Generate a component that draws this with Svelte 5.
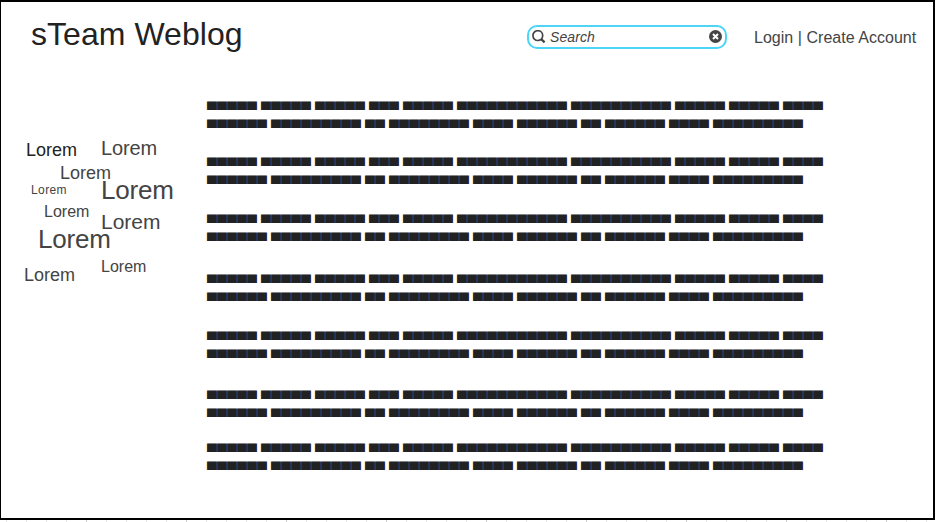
<script>
  const tags = [
    { x: 26, base: 156, size: 18, dark: true },
    { x: 101, base: 155, size: 20, spacing: -0.15 },
    { x: 60, base: 179, size: 18 },
    { x: 31, base: 194, size: 12, spacing: 0.4 },
    { x: 101, base: 199, size: 26, spacing: -0.2 },
    { x: 44, base: 218, size: 16 },
    { x: 101, base: 230, size: 21 },
    { x: 38, base: 248, size: 26, spacing: -0.2 },
    { x: 101, base: 273, size: 16 },
    { x: 24, base: 281, size: 18 }
  ];
  // Word lengths of the two placeholder lines
  const lines = [
    [5, 5, 5, 3, 5, 11, 10, 5, 5, 4],
    [6, 9, 2, 8, 4, 6, 2, 6, 4, 9]
  ].map((l) => l.map((n) => '▄'.repeat(n)).join(' '));
  // Space after each post
  const gaps = [20, 21, 24, 21, 23, 17, 0];
  // Line box is 30px; the baseline sits below its centre
  const top = (t) => t.base - 15 - Math.round((Math.round(t.size * 0.905) - Math.round(t.size * 0.212)) / 2);
</script>

<div class="canvas">
  <div class="window">
    <header>
      <h1>sTeam Weblog</h1>
      <div class="search">
        <svg width="14" height="14" viewBox="0 0 14 14" fill="none" stroke="#444">
          <circle cx="5.8" cy="5.6" r="4.9" stroke-width="1.7" />
          <path d="M9.2 9.2L12.6 12.4" stroke-width="2.3" />
        </svg>
        <span>Search</span>
        <svg class="clear" width="13" height="13" viewBox="0 0 13 13">
          <circle cx="6.5" cy="6.5" r="6.5" fill="#444" />
          <path d="M4 4L9 9M9 4L4 9" stroke="#fff" stroke-width="2" />
        </svg>
      </div>
      <nav>Login | Create Account</nav>
    </header>
    <main>
      <aside>
        {#each tags as t}
          <span class="tag" class:dark={t.dark} style="left:{t.x - 1}px;top:{top(t) - 82}px;font-size:{t.size}px;letter-spacing:{t.spacing ?? 0}px">Lorem</span>
        {/each}
      </aside>
      <section>
        {#each gaps as g}
          <p style="margin-bottom:{g}px">{#each lines as line}<span>{line}</span>{/each}</p>
        {/each}
      </section>
    </main>
  </div>
</div>

<style>
  .canvas {
    width: 936px;
    height: 522px;
    overflow: hidden;
    background:
      repeating-linear-gradient(90deg, transparent 0 86px, #ccc 86px 87px, transparent 87px 100px) 0 0,
      repeating-linear-gradient(90deg, transparent 0 6px, #e5e5e5 6px 7px, transparent 7px 20px) 0 0,
      #fff;
    font-family: "Liberation Sans", Arial, sans-serif;
    color: #444;
  }
  .window {
    box-sizing: border-box;
    width: 935px;
    height: 520px;
    border: 2px solid #000;
    border-left-width: 1px;
    background: #fff;
  }
  header {
    display: flex;
    height: 80px;
    box-sizing: border-box;
    padding-left: 30px;
  }
  h1 {
    margin: 14px 0 0;
    width: 496px;
    font-size: 32px;
    line-height: 36px;
    font-weight: 400;
    letter-spacing: 0.05px;
    font-kerning: normal;
    color: #222;
  }
  .search {
    box-sizing: border-box;
    display: flex;
    align-items: center;
    width: 200px;
    height: 24px;
    margin-top: 23px;
    padding: 0 3px;
    border: 2px solid #4dd5f7;
    border-radius: 10px;
    font-size: 14px;
    font-style: italic;
  }
  .search span {
    flex: 1;
    margin-left: 4px;
    letter-spacing: 0.08px;
  }
  .clear {
    margin-bottom: 1px;
  }
  nav {
    margin: 27px 0 0 27px;
    font-size: 16px;
    line-height: 18px;
    letter-spacing: 0.03px;
    white-space: nowrap;
  }
  main {
    display: flex;
  }
  aside {
    position: relative;
    width: 206px;
  }
  .tag {
    position: absolute;
    line-height: 30px;
  }
  .dark {
    color: #222;
  }
  section {
    padding-top: 10px;
  }
  p {
    margin: 0;
    font-size: 14px;
    line-height: 18px;
    letter-spacing: 0.085px;
    color: #222;
    white-space: nowrap;
  }
  p span {
    display: block;
  }
</style>
